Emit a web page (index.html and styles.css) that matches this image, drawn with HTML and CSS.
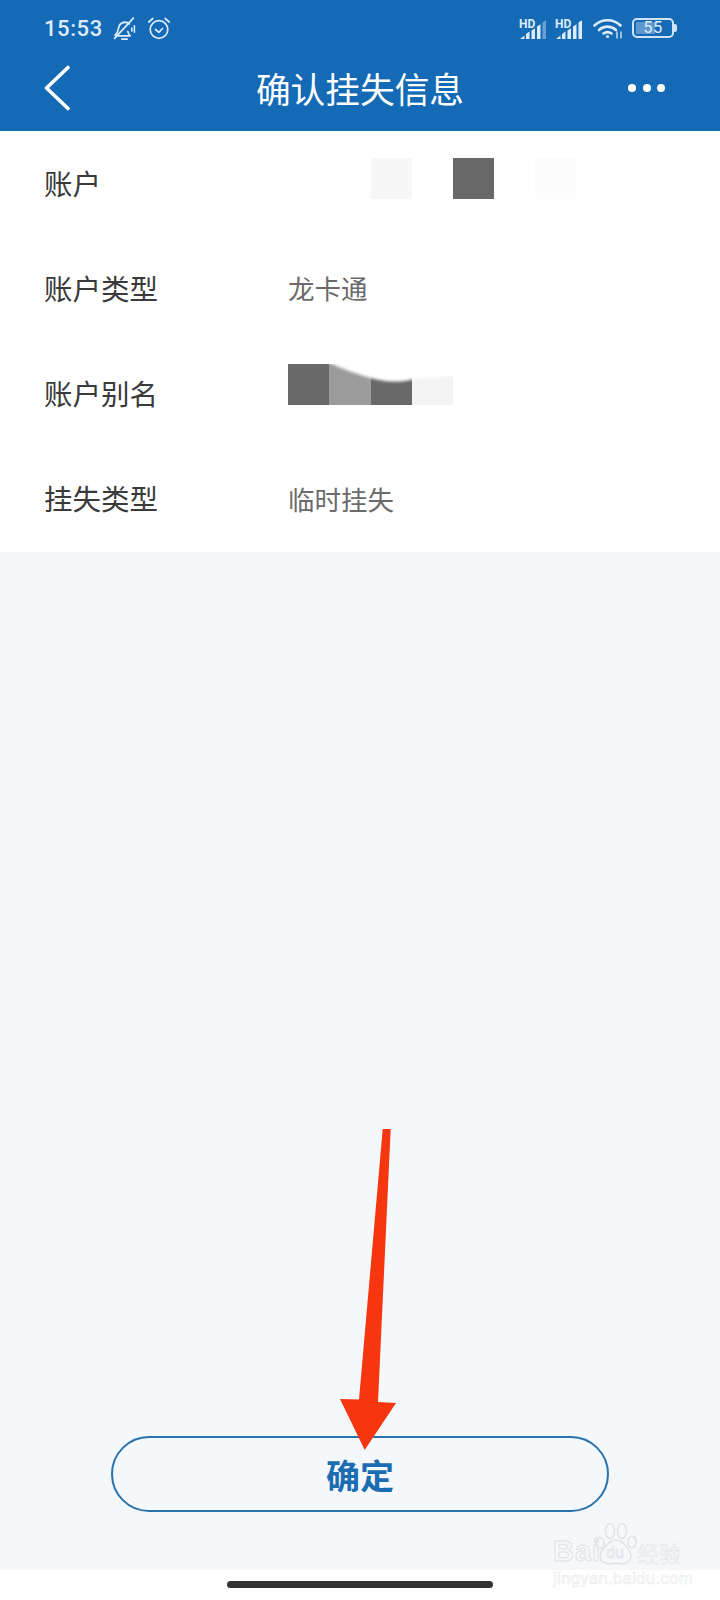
FILE: index.html
```html
<!DOCTYPE html>
<html lang="zh-CN">
<head>
<meta charset="utf-8">
<title>确认挂失信息</title>
<link rel="stylesheet" href="styles.css">
</head>
<body>
<div class="page">
  <header class="header">
    <div class="status">
      <div class="status-left">
        <span class="time">15:53</span>
        <svg class="ic-bell" width="25" height="25" viewBox="0 0 24 24" fill="none" stroke="#dcecfb" stroke-width="1.700" stroke-linecap="round" stroke-linejoin="round">
          <path d="M3 18.500c2-1.500 2.500-3 3-6 .6-4 3-6.500 6.500-6.500 1.500 0 3 .5 4 1.500"/>
          <path d="M5 19h12.500c-1.500-1.300-2-2.500-2.300-4"/>
          <path d="M9.500 22.300h5"/>
          <path d="M2.500 21.500 20.500 2"/>
          <path d="M19 11.500v3M21.500 9.500v6" stroke-width="1.500"/>
        </svg>
        <svg class="ic-alarm" width="24" height="24" viewBox="0 0 24 24" fill="none" stroke="#dcecfb" stroke-width="1.700" stroke-linecap="round" stroke-linejoin="round">
          <circle cx="12" cy="13.500" r="8.800"/>
          <path d="M8.500 13.500l3.300 2.800 3.800-3.800"/>
          <path d="M1.800 6 5.800 2.500M22.200 6l-4-3.500"/>
        </svg>
      </div>
      <div class="status-right">
        <svg class="ic-signal" width="28" height="21" viewBox="0 0 28 21">
          <text x="0" y="9.500" class="hd">HD</text>
          <path fill="#dcecfb" d="M1 21l4.500-3.500V21zM7 16l3.500-2.500V21H7zM12.500 12.500l3.500-2.300V21h-3.500zM18 8.500l3.500-2.300V21H18z"/>
          <path fill="#6c9fd2" d="M23.500 4.500l3.500-2.300V21h-3.500z"/>
        </svg>
        <svg class="ic-signal" width="28" height="21" viewBox="0 0 28 21">
          <text x="0" y="9.500" class="hd">HD</text>
          <path fill="#dcecfb" d="M1 21l4.500-3.500V21zM7 16l3.500-2.500V21H7zM12.500 12.500l3.500-2.300V21h-3.500zM18 8.500l3.500-2.300V21H18zM23.500 4.500l3.500-2.300V21h-3.500z"/>
        </svg>
        <svg class="ic-wifi" width="30" height="21" viewBox="0 0 30 21" fill="none" stroke="#dcecfb" stroke-width="2.600" stroke-linecap="round">
          <path d="M1.500 7.500C8.500 .5 20.500 .5 27.500 7.500"/>
          <path d="M6 12c4.800-4.500 12-4.500 17 0"/>
          <path d="M10.500 15.500c2.500-1.800 5.500-1.800 8 0"/>
          <circle cx="14.500" cy="18.500" r="1.600" fill="#dcecfb" stroke="none"/>
          <path d="M24 14v6M28 14v6" stroke-width="1.300"/>
        </svg>
        <div class="battery">
          <div class="battery-body">
            <span class="battery-fill"></span>
            <span class="battery-num">55</span>
          </div>
          <span class="battery-nub"></span>
        </div>
      </div>
    </div>
    <nav class="nav">
      <svg class="ic-back" width="26" height="46" viewBox="0 0 26 46" fill="none" stroke="#fff" stroke-width="3.600" stroke-linecap="round" stroke-linejoin="round">
        <path d="M24 2.500 2.500 23 24 43.500"/>
      </svg>
      <h1 class="title">确认挂失信息</h1>
      <div class="more"><i></i><i></i><i></i></div>
    </nav>
  </header>

  <main class="main">
    <section class="list">
      <div class="row">
        <span class="label">账户</span>
        <div class="mask mask-account"><i class="sq s1"></i><i class="gap"></i><i class="sq s2"></i><i class="gap"></i><i class="sq s3"></i></div>
      </div>
      <div class="row">
        <span class="label">账户类型</span>
        <span class="value">龙卡通</span>
      </div>
      <div class="row">
        <span class="label">账户别名</span>
        <svg class="mask-alias" width="166" height="41" viewBox="0 0 166 41">
          <defs><filter id="soft" x="-10%" y="-50%" width="120%" height="200%"><feGaussianBlur stdDeviation="1.500"/></filter></defs>
          <rect x="0" width="41" height="41" fill="#696969"/>
          <rect x="41" width="42" height="41" fill="#9b9b9b"/>
          <rect x="83" width="41" height="41" fill="#696969"/>
          <rect x="124" width="41" height="41" fill="#f4f4f4"/>
          <path fill="#fff" filter="url(#soft)" d="M30-6C44 0 56 6 76 12C92 17 108 20 126 15C140 13 155 13 170 12V-6z"/>
        </svg>
      </div>
      <div class="row">
        <span class="label">挂失类型</span>
        <span class="value">临时挂失</span>
      </div>
    </section>
    <div class="actions">
      <button class="confirm" type="button">确定</button>
    </div>
  </main>

  <footer class="home"><span class="home-bar"></span></footer>

  <svg class="arrow" width="720" height="1600" viewBox="0 0 720 1600">
    <polygon fill="#f5360e" points="382.700,1129 390.700,1129 378,1402 396,1403 364.700,1450 340,1399 359,1399.500"/>
  </svg>

  <div class="watermark">
    <svg class="paw" width="42" height="44" viewBox="0 0 42 44" fill="none" stroke="#dfe3e7" stroke-width="1.500">
      <ellipse cx="5" cy="21" rx="4" ry="5.500" />
      <ellipse cx="15" cy="9" rx="4.500" ry="7.500"/>
      <ellipse cx="27" cy="9" rx="4.500" ry="7.500"/>
      <ellipse cx="37" cy="20" rx="4" ry="6"/>
      <path d="M21 18c6 0 15 10 15 17 0 6-8 8-15 6-7 2-16 0-16-6 0-7 10-17 16-17z"/>
    </svg>
    <span class="wm-bai">Bai</span>
    <span class="wm-du">du</span>
    <span class="wm-cn">经验</span>
    <span class="wm-url">jingyan.baidu.com</span>
  </div>
</div>
</body>
</html>
```
FILE: styles.css
```css
* { box-sizing: border-box; }
html, body { margin: 0; padding: 0; }
body { font-family: "Noto Sans CJK SC", "Noto Sans", sans-serif; background: #fff; }

.page { position: relative; width: 720px; height: 1600px; display: flex; flex-direction: column; overflow: hidden; }

.header { height: 131px; flex: none; background: #156ab5; }
.status { height: 56px; display: flex; justify-content: space-between; align-items: center; padding: 0 43px 0 44px; }
.status-left { display: flex; align-items: center; }
.time { font-family: Roboto, sans-serif; font-weight: 500; font-size: 22px; letter-spacing: .6px; color: #dcecfb; margin-right: 9px; }
.ic-alarm { margin-left: 10px; }
.status-right { display: flex; align-items: center; gap: 8px; }
.hd { font-family: Roboto, sans-serif; font-weight: 700; font-size: 12px; fill: #dcecfb; }
.ic-wifi { margin: 0 0 0 2px; }
.battery { display: flex; align-items: center; margin-left: 1px; }
.battery-body { position: relative; width: 42px; height: 20px; border: 2px solid #cfe4f8; border-radius: 5px; display: flex; align-items: center; justify-content: center; }
.battery-fill { position: absolute; left: 2px; top: 2px; bottom: 2px; width: 19px; background: #5f97cf; border-radius: 1px; }
.battery-num { position: relative; font-family: Roboto, sans-serif; font-size: 16.500px; line-height: 1; color: #dcecfb; letter-spacing: .5px; }
.battery-nub { width: 3px; height: 8px; background: #cfe4f8; border-radius: 0 2px 2px 0; }

.nav { height: 75px; display: flex; align-items: center; justify-content: space-between; padding: 0 55px 11px 44px; position: relative; }
.ic-back { display: block; }
.title { position: absolute; left: 0; right: 0; top: 9px; margin: 0; text-align: center; font-size: 34.700px; line-height: 46px; font-weight: 400; color: #fff; }
.more { display: flex; gap: 6.500px; }
.more i { width: 8px; height: 8px; border-radius: 50%; background: #fff; display: block; }

.main { flex: 1; background: #f4f8fb; display: flex; flex-direction: column; justify-content: space-between; }
.list { background: #fff; height: 421px; display: flex; flex-direction: column; }
.row { flex: 1; display: flex; align-items: center; padding-left: 44px; }
.label { width: 244px; font-size: 28.500px; line-height: 40px; color: #3a3a3a; margin-top: -2px; }
.value { font-size: 26.500px; line-height: 36px; color: #6b6b6b; margin-top: -1px; }
.mask { display: flex; }
.mask i { display: block; width: 41px; height: 41px; }
.mask-account { margin-left: 83px; margin-top: -10px; }
.mask-alias { display: block; margin-top: -19px; }
.s1 { background: #f7f7f7; }
.s2 { background: #686868; }
.s3 { background: #fcfcfc; }

.actions { display: flex; justify-content: center; padding: 0 111px 58px 111px; }
.confirm { width: 498px; height: 76px; border: 2px solid #2a73ac; border-radius: 38px; background: transparent; font-family: inherit; font-size: 34px; font-weight: 700; color: #1c6cb2; padding: 0; }

.home { height: 30px; flex: none; background: #fff; display: flex; justify-content: center; padding-top: 11px; }
.home-bar { width: 266px; height: 7px; border-radius: 4px; background: #333; display: block; }

.arrow { position: absolute; left: 0; top: 0; pointer-events: none; }

.watermark { position: absolute; left: 553px; top: 1522px; width: 130px; height: 64px; color: transparent; pointer-events: none; font-family: "Liberation Sans", sans-serif; -webkit-text-stroke: 1px #dfe3e7; }
.paw { position: absolute; left: 42px; top: 0; }
.wm-bai { position: absolute; left: 0; top: 14px; font-size: 29px; line-height: 30px; font-weight: 700; letter-spacing: 1px; }
.wm-du { position: absolute; left: 53px; top: 22px; font-size: 16px; line-height: 18px; -webkit-text-stroke: .7px #dfe3e7; }
.wm-cn { position: absolute; left: 84px; top: 17px; font-family: "Noto Sans CJK SC", sans-serif; font-size: 22px; line-height: 26px; -webkit-text-stroke: .6px #e3e6ea; }
.wm-url { position: absolute; left: 0; top: 47px; font-size: 16.500px; line-height: 18px; letter-spacing: .4px; -webkit-text-stroke: .5px #e6e8ea; }
```
